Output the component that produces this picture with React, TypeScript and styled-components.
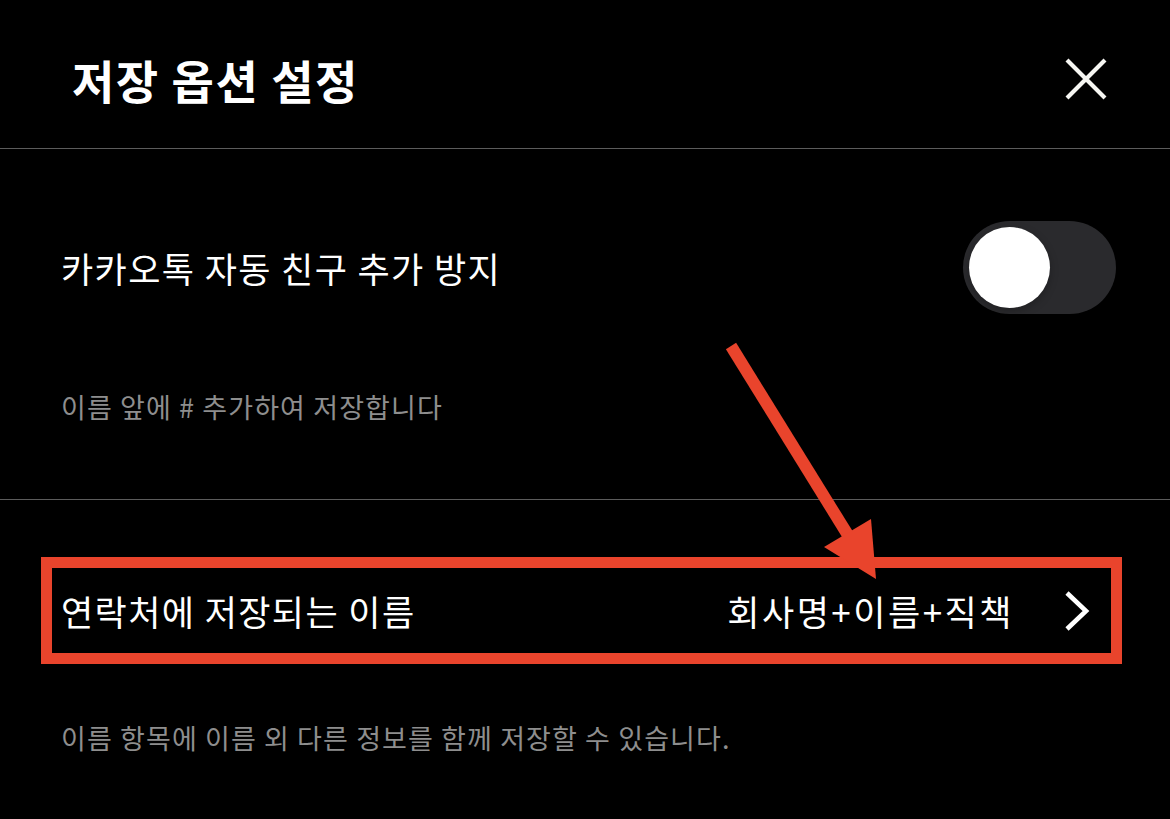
import React from "react";
import styled, { createGlobalStyle } from "styled-components";

const RED = "#e9442c";

const GlobalStyle = createGlobalStyle`
  html, body {
    margin: 0;
    padding: 0;
    background: #000;
  }
  body {
    font-family: "Noto Sans CJK KR", "Noto Sans", sans-serif;
    color: #fff;
  }
`;

const Screen = styled.div`
  position: relative;
  width: 1170px;
  height: 819px;
  background: #000;
  overflow: hidden;
`;

const Header = styled.header`
  display: flex;
  align-items: center;
  justify-content: space-between;
  box-sizing: border-box;
  height: 149px;
  padding: 10px 63px 0 72px;
  border-bottom: 1px solid #5c5c5c;
`;

const Title = styled.h1`
  margin: 0;
  font-size: 46px;
  font-weight: 700;
  letter-spacing: 1.5px;
  color: #fff;
`;

const CloseButton = styled.button`
  display: flex;
  align-items: center;
  justify-content: center;
  width: 42px;
  height: 42px;
  padding: 0;
  border: none;
  background: none;
  cursor: pointer;
`;

const Section = styled.section<{ $top: number; $divider?: boolean }>`
  padding: ${(p) => p.$top}px 54px ${(p) => (p.$divider ? 74 : 0)}px 61px;
  border-bottom: ${(p) => (p.$divider ? "1px solid #5c5c5c" : "none")};
`;

const Row = styled.div<{ $height: number }>`
  display: flex;
  align-items: center;
  justify-content: space-between;
  height: ${(p) => p.$height}px;
`;

const Label = styled.span`
  font-size: 35px;
  font-weight: 400;
  letter-spacing: 1.4px;
  color: #fff;
`;

const Value = styled.span`
  display: flex;
  align-items: center;
  gap: 50px;
  font-size: 35px;
  letter-spacing: 2.5px;
  color: #fff;
`;

const Description = styled.p<{ $gap: number }>`
  margin: ${(p) => p.$gap}px 0 0;
  font-size: 27px;
  line-height: 36px;
  letter-spacing: 1.1px;
  color: #8e8e8e;
`;

const Highlight = styled.div`
  margin: 0 -6px 0 -20px;
  padding: 0 21px 0 9px;
  border: 11px solid ${RED};
`;

const Track = styled.div<{ $on: boolean }>`
  display: flex;
  align-items: center;
  justify-content: ${(p) => (p.$on ? "flex-end" : "flex-start")};
  width: 153px;
  height: 93px;
  padding: 0 6px;
  box-sizing: border-box;
  border-radius: 47px;
  background: ${(p) => (p.$on ? "#34c759" : "#2a2a2d")};
`;

const Knob = styled.div`
  width: 81px;
  height: 81px;
  border-radius: 50%;
  background: #fff;
  box-shadow: 0 3px 8px rgba(0, 0, 0, 0.25);
`;

const Annotation = styled.svg`
  position: absolute;
  top: 0;
  left: 0;
  pointer-events: none;
`;

const Toggle = ({ on }: { on: boolean }) => (
  <Track $on={on}>
    <Knob />
  </Track>
);

const CloseIcon = () => (
  <svg width="42" height="42" viewBox="0 0 42 42">
    <path d="M2 2 L40 40 M40 2 L2 40" stroke="#f6f6f2" strokeWidth="4.2" strokeLinecap="butt" />
  </svg>
);

const Chevron = () => (
  <svg width="26" height="42" viewBox="0 0 26 42">
    <path d="M3 3 L22 21 L3 39" fill="none" stroke="#fff" strokeWidth="4.6" strokeLinejoin="miter" />
  </svg>
);

export default function App() {
  return (
    <>
      <GlobalStyle />
      <Screen>
        <Header>
          <Title>저장 옵션 설정</Title>
          <CloseButton aria-label="닫기">
            <CloseIcon />
          </CloseButton>
        </Header>

        <Section $top={72} $divider>
          <Row $height={93}>
            <Label>카카오톡 자동 친구 추가 방지</Label>
            <Toggle on={false} />
          </Row>
          <Description $gap={75}>이름 앞에 # 추가하여 저장합니다</Description>
        </Section>

        <Section $top={57}>
          <Highlight>
            <Row $height={85}>
              <Label>연락처에 저장되는 이름</Label>
              <Value>
                회사명+이름+직책
                <Chevron />
              </Value>
            </Row>
          </Highlight>
          <Description $gap={56}>이름 항목에 이름 외 다른 정보를 함께 저장할 수 있습니다.</Description>
        </Section>

        <Annotation width="1170" height="819" viewBox="0 0 1170 819">
          <line x1="731" y1="346" x2="851" y2="540" stroke={RED} strokeWidth="12" />
          <polygon points="824,547 871,519 876,579" fill={RED} />
        </Annotation>
      </Screen>
    </>
  );
}
